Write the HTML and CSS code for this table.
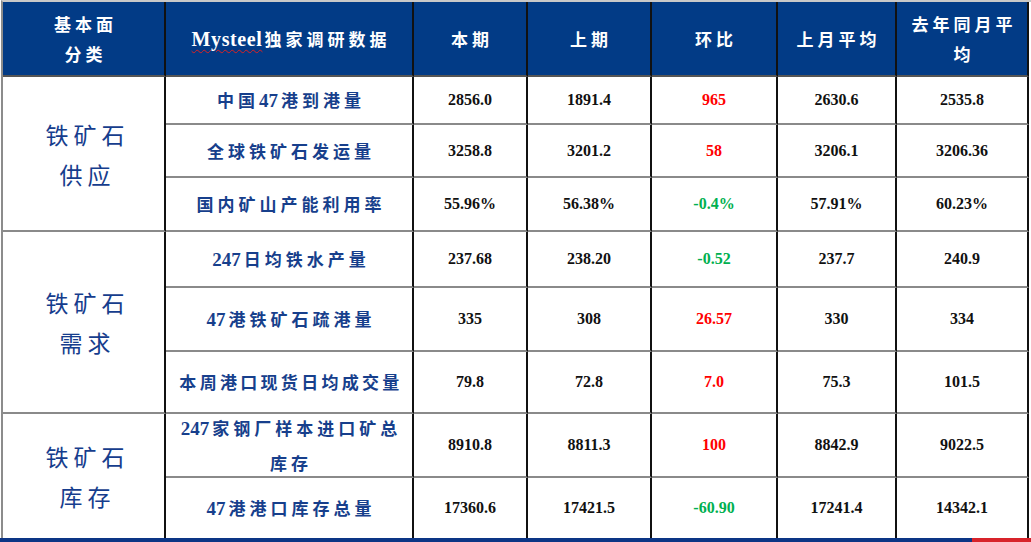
FILE: index.html
```html
<!DOCTYPE html>
<html lang="zh-CN">
<head>
<meta charset="utf-8">
<title>Mysteel 铁矿石数据</title>
<link rel="stylesheet" href="styles.css">
</head>
<body>
<div class="table">
  <div class="cell head"><span>基本面<br>分类</span></div>
  <div class="cell head"><span><span class="spell">Mysteel</span>独家调研数据</span></div>
  <div class="cell head"><span>本期</span></div>
  <div class="cell head"><span>上期</span></div>
  <div class="cell head"><span>环比</span></div>
  <div class="cell head"><span>上月平均</span></div>
  <div class="cell head"><span>去年同月平<br>均</span></div>

  <div class="cell cat supply"><span>铁矿石<br>供应</span></div>
  <div class="cell item"><span>中国<span class="n">47</span>港到港量</span></div>
  <div class="cell num">2856.0</div>
  <div class="cell num">1891.4</div>
  <div class="cell num up">965</div>
  <div class="cell num">2630.6</div>
  <div class="cell num">2535.8</div>

  <div class="cell item"><span>全球铁矿石发运量</span></div>
  <div class="cell num">3258.8</div>
  <div class="cell num">3201.2</div>
  <div class="cell num up">58</div>
  <div class="cell num">3206.1</div>
  <div class="cell num">3206.36</div>

  <div class="cell item"><span>国内矿山产能利用率</span></div>
  <div class="cell num">55.96%</div>
  <div class="cell num">56.38%</div>
  <div class="cell num down">-0.4%</div>
  <div class="cell num">57.91%</div>
  <div class="cell num">60.23%</div>

  <div class="cell cat demand"><span>铁矿石<br>需求</span></div>
  <div class="cell item"><span><span class="n">247</span>日均铁水产量</span></div>
  <div class="cell num">237.68</div>
  <div class="cell num">238.20</div>
  <div class="cell num down">-0.52</div>
  <div class="cell num">237.7</div>
  <div class="cell num">240.9</div>

  <div class="cell item"><span><span class="n">47</span>港铁矿石疏港量</span></div>
  <div class="cell num">335</div>
  <div class="cell num">308</div>
  <div class="cell num up">26.57</div>
  <div class="cell num">330</div>
  <div class="cell num">334</div>

  <div class="cell item tight"><span>本周港口现货日均成交量</span></div>
  <div class="cell num">79.8</div>
  <div class="cell num">72.8</div>
  <div class="cell num up">7.0</div>
  <div class="cell num">75.3</div>
  <div class="cell num">101.5</div>

  <div class="cell cat stock"><span>铁矿石<br>库存</span></div>
  <div class="cell item two"><span><span class="n">247</span>家钢厂样本进口矿总<br>库存</span></div>
  <div class="cell num">8910.8</div>
  <div class="cell num">8811.3</div>
  <div class="cell num up">100</div>
  <div class="cell num">8842.9</div>
  <div class="cell num">9022.5</div>

  <div class="cell item last"><span><span class="n">47</span>港港口库存总量</span></div>
  <div class="cell num last">17360.6</div>
  <div class="cell num last">17421.5</div>
  <div class="cell num down last">-60.90</div>
  <div class="cell num last">17241.4</div>
  <div class="cell num last">14342.1</div>
</div>
<div class="bar"><div class="bar-blue"></div><div class="bar-red"></div></div>
</body>
</html>
```

FILE: styles.css
```css
html, body {
  margin: 0;
  padding: 0;
  background: #ffffff;
}

body {
  width: 1031px;
  height: 542px;
  overflow: hidden;
  font-family: "Liberation Serif", "Noto Sans CJK SC", serif;
}

.table {
  display: grid;
  grid-template-columns: 163px 248px 114px 124px 126px 119px 132px;
  grid-template-rows: 75px 48px 53px 54px 56px 64px 62px 64px 60px;
  margin-left: 1px;
  border-left: 2px solid #8c8c8c;
  border-top: 2px solid #c8c8c8;
}

.cell {
  box-sizing: border-box;
  border-right: 2px solid #111111;
  border-bottom: 2px solid #8a8a8a;
  display: flex;
  align-items: center;
  justify-content: center;
  text-align: center;
}

.head {
  background: #023b86;
  color: #ffffff;
  font-family: "Noto Sans CJK SC", sans-serif;
  font-weight: 700;
  font-size: 17px;
  line-height: 30px;
  letter-spacing: 4px;
  border-bottom-color: #555555;
  padding-left: 4px;
}

.spell {
  font-family: "Liberation Serif", serif;
  font-weight: 700;
  font-size: 20px;
  letter-spacing: 0.6px;
  margin-right: 2px;
  text-decoration: underline wavy #e02020;
  text-decoration-thickness: 1px;
  text-underline-offset: 3px;
}

.cat {
  color: #163d8d;
  font-family: "Noto Sans CJK SC", sans-serif;
  font-weight: 400;
  font-size: 23px;
  line-height: 40px;
  letter-spacing: 5px;
  padding-left: 8px;
}

.supply { grid-row: 2 / span 3; }
.demand { grid-row: 5 / span 3; }
.stock { grid-row: 8 / span 2; border-bottom: none; }

.item {
  color: #173f8c;
  font-family: "Noto Sans CJK SC", sans-serif;
  font-weight: 700;
  font-size: 17px;
  line-height: 30px;
  letter-spacing: 4px;
  padding-left: 4px;
  white-space: nowrap;
}

.item .n {
  font-family: "Liberation Serif", serif;
  font-size: 19px;
  letter-spacing: 0;
  margin-right: 3px;
}

.item.tight {
  letter-spacing: 3.3px;
}

.item.two {
  line-height: 34px;
}

.num {
  font-family: "Liberation Serif", serif;
  font-weight: 700;
  font-size: 16px;
  color: #111111;
}

.up { color: #ff0000; }
.down { color: #00b050; }

.last { border-bottom: none; }

.bar {
  display: flex;
  height: 4px;
}

.bar-blue {
  flex: 1;
  background: #0c3585;
}

.bar-red {
  width: 59px;
  background: #d8232a;
}
```
